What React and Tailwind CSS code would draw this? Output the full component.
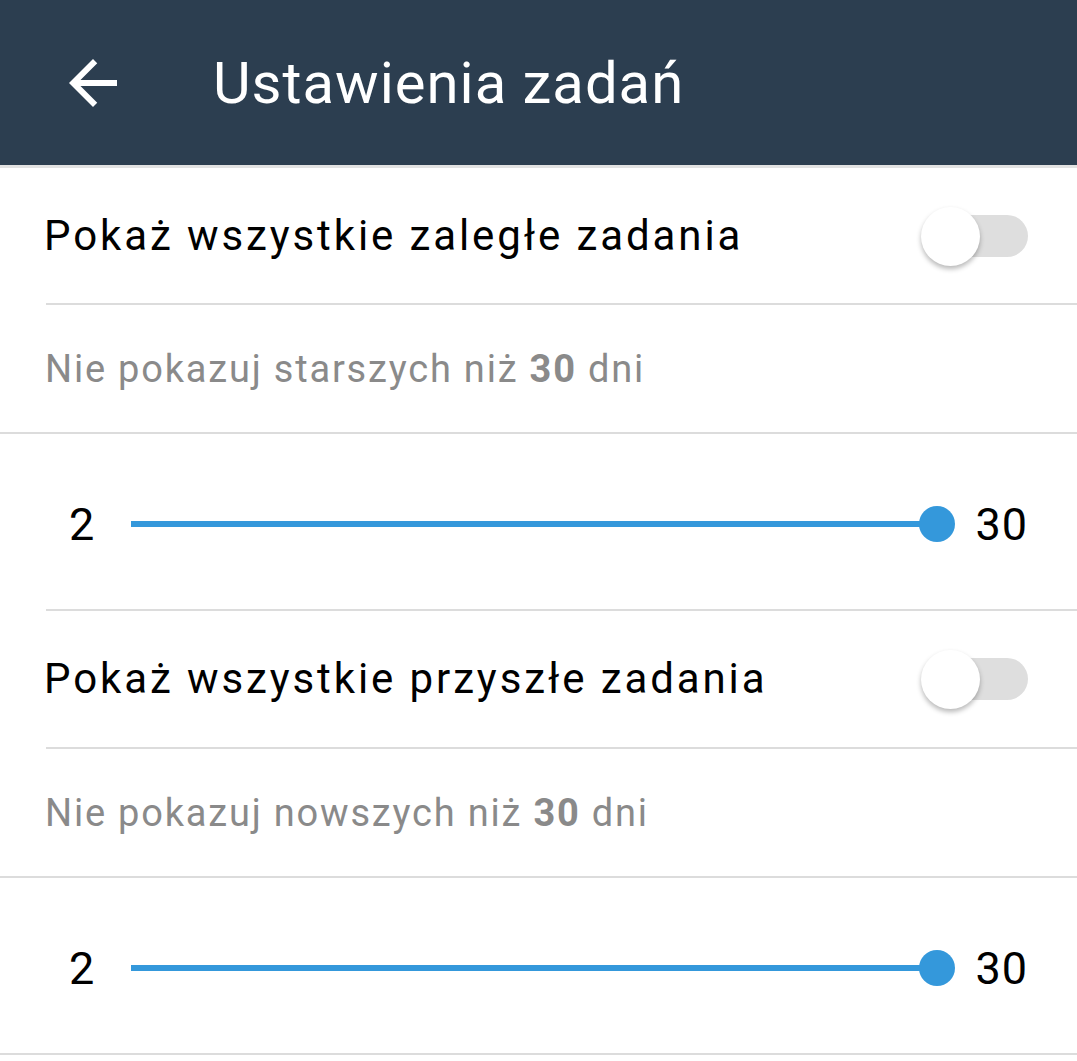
import { memo } from "react";

const FONT = "font-['Roboto','Liberation_Sans',sans-serif]";

function ArrowBack() {
  return (
    <svg width="72" height="72" viewBox="0 0 24 24" fill="white">
      <path d="M20 11H7.83l5.59-5.59L12 4l-8 8 8 8 1.41-1.41L7.83 13H20v-2z" />
    </svg>
  );
}

function Header() {
  return (
    <header className="flex h-[165px] items-center bg-[#2c3e50]">
      <div className="ml-[57px] flex">
        <ArrowBack />
      </div>
      <h1 className="ml-[84px] text-[58px] font-normal leading-none tracking-[1px] text-white">Ustawienia zadań</h1>
    </header>
  );
}

function Divider({ inset }) {
  return <div className={inset ? "ml-[46px] h-[2px] bg-[#dcdcdc]" : "h-[2px] bg-[#dcdcdc]"} />;
}

function Toggle() {
  return (
    <div className="relative h-[42px] w-[100px] rounded-full bg-[#dedede]">
      <div className="absolute left-[-7px] top-[-8px] h-[59px] w-[59px] rounded-full bg-white shadow-[0_3px_5px_rgba(0,0,0,0.28)]" />
    </div>
  );
}

function ToggleRow({ label, height }) {
  return (
    <div className={"flex items-center justify-between pl-[44px] pr-[49px] " + height}>
      <span className="text-[42px] leading-none tracking-[2.9px] text-black">{label}</span>
      <Toggle />
    </div>
  );
}

function InfoRow({ word }) {
  return (
    <div className="flex h-[127px] items-center pl-[45px]">
      <span className="text-[38px] leading-none tracking-[1.8px] text-[#8a8a8a]">
        Nie pokazuj {word} niż <b className="font-bold">30</b> dni
      </span>
    </div>
  );
}

function SliderRow() {
  return (
    <div className="flex h-[175px] items-center pl-[69px] pr-[49px] pt-[5px]">
      <span className="text-[45px] leading-none text-black">2</span>
      <div className="relative ml-[37px] mr-[20px] h-[36px] flex-1">
        <div className="absolute left-0 right-[18px] top-[15px] h-[6px] bg-[#3498db]" />
        <div className="absolute right-0 top-0 h-[36px] w-[36px] rounded-full bg-[#3498db]" />
      </div>
      <span className="text-[45px] leading-none tracking-[1px] text-black">30</span>
    </div>
  );
}

function App() {
  return (
    <div className={"min-h-[1061px] w-full bg-white " + FONT}>
      <Header />
      <div className="h-[3px] bg-[#e2e2e2]" />
      <ToggleRow label="Pokaż wszystkie zaległe zadania" height="h-[135px]" />
      <Divider inset />
      <InfoRow word="starszych" />
      <Divider />
      <SliderRow />
      <Divider inset />
      <ToggleRow label="Pokaż wszystkie przyszłe zadania" height="h-[136px]" />
      <Divider inset />
      <InfoRow word="nowszych" />
      <Divider />
      <SliderRow />
      <Divider />
    </div>
  );
}

export default memo(App);
